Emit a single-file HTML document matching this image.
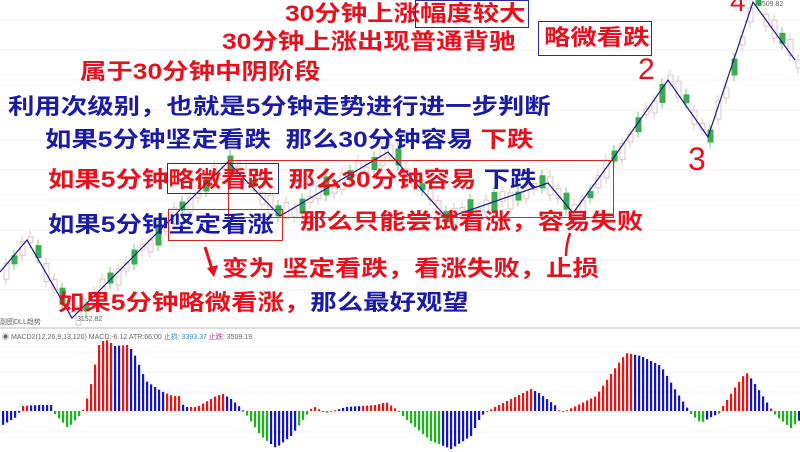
<!DOCTYPE html>
<html><head><meta charset="utf-8"><style>
body{margin:0;width:800px;height:452px;overflow:hidden;background:#fff;position:relative;font-family:"Liberation Sans","Noto Sans CJK SC",sans-serif;font-weight:bold}
.t{position:absolute;white-space:nowrap;line-height:1;transform:scaleX(1.2);transform-origin:0 0;font-size:22px}
.r{color:#e8101c}.b{color:#1a1aa8}
.box{position:absolute;border:1.5px solid #2a2aa0}
.rbox{position:absolute;border:1.5px solid #d22}
svg{position:absolute;left:0;top:0}
.sm{position:absolute;font-size:7px;font-weight:normal;color:#666;white-space:nowrap}
.n{position:absolute;color:#e8101c;font-weight:normal;line-height:1}
</style></head><body>
<svg id="s" width="800" height="452"></svg>
<div class="t r" style="left:285px;top:3px">30分钟上涨幅度较大</div>
<div class="box" style="left:415px;top:0px;width:112px;height:26px"></div>
<div class="t r" style="left:222px;top:31px">30分钟上涨出现普通背驰</div>
<div class="box" style="left:538px;top:21px;width:112px;height:33px"></div>
<div class="t r" style="left:544px;top:27px">略微看跌</div>
<div class="t r" style="left:80px;top:61px">属于30分钟中阴阶段</div>
<div class="t b" style="left:8px;top:96px">利用次级别，也就是5分钟走势进行进一步判断</div>
<div class="t b" style="left:45px;top:129px">如果5分钟坚定看跌&nbsp; 那么30分钟容易 <span class="r">下跌</span></div>
<div class="rbox" style="left:228px;top:160px;width:384px;height:56px"></div>
<div class="box" style="left:167px;top:163px;width:110px;height:29px"></div>
<div class="t r" style="left:48px;top:169px">如果5分钟略微看跌&nbsp; 那么30分钟容易 <span class="b">下跌</span></div>
<div class="rbox" style="left:168px;top:209px;width:113px;height:30px"></div>
<div class="t b" style="left:48px;top:214px">如果5分钟坚定看涨</div>
<div class="t r" style="left:300px;top:211px">那么只能尝试看涨，容易失败</div>
<div class="t r" style="left:222px;top:258px">变为 坚定看跌，看涨失败，止损</div>
<div class="t r" style="left:58px;top:292px">如果5分钟略微看涨，<span class="b">那么最好观望</span></div>
<div class="n" style="left:638px;top:55px;font-size:30px">2</div>
<div class="n" style="left:688px;top:143px;font-size:32px">3</div>
<div class="n" style="left:730px;top:-12px;font-size:28px">4</div>
<div class="sm" style="left:77px;top:316px">3152.82</div>
<div class="sm" style="left:758px;top:1px">3509.82</div>
<div class="sm" style="left:0;top:317px">副图DLL趋势</div>
<div class="sm" style="left:2px;top:332px">◉ MACD2(12,26,9,13,120) MACD:-6.12 ATR:66.00 <span style="color:#38c">止损: 3393.37</span> <span style="color:#a3a">止跌:</span> 3509.19</div>
<script>
var s=document.getElementById('s'),h='';
for(var y=20;y<320;y+=30)h+='<line x1="0" x2="800" y1="'+y+'" y2="'+y+'" stroke="#f0f0f0"/>';
h+='<line x1="0" x2="800" y1="328" y2="328" stroke="#ddd" stroke-width="2"/>';
for(var y=352;y<452;y+=20)h+='<line x1="0" x2="800" y1="'+y+'" y2="'+y+'" stroke="#f2f2f2"/>';
var P=[[0,272],[27,240],[72,318],[228,162],[280,216],[388,152],[447,218],[548,183],[573,213],[612,160],[668,80],[708,137],[753,2],[795,60]];
function yAt(x){for(var i=0;i<P.length-1;i++)if(x>=P[i][0]&&x<=P[i+1][0])return P[i][1]+(P[i+1][1]-P[i][1])*(x-P[i][0])/(P[i+1][0]-P[i][0]);return 60}
for(var x=4;x<800;x+=8){var c=yAt(x)+((x*11)%9-4),g=(x*7)%3==0,hh=6+(x*13)%14;
h+='<line x1="'+(x+2)+'" x2="'+(x+2)+'" y1="'+(c-hh/2-6)+'" y2="'+(c+hh/2+6)+'" stroke="'+(g?'#7c7':'#dcc')+'"/>';
h+='<rect x="'+x+'" y="'+(c-hh/2)+'" width="5" height="'+hh+'" fill="'+(g?'#3bac50':'#fff')+'" stroke="'+(g?'#3bac50':'#e0c4c4')+'"/>';}
h+='<polyline points="'+P.join(' ')+'" fill="none" stroke="#1a1a90" stroke-width="1.2"/>';
h+='<path d="M205 247 L213 272" stroke="#e8101c" stroke-width="3"/><path d="M207 268 L214 277 L218 265" fill="#e8101c"/>';
h+='<path d="M570 233 Q566 245 566 256" stroke="#e8101c" stroke-width="2.5" fill="none"/>';
var Z=411,K=[[0,-15,'b'],[17,-5,'b'],[20,5,'r'],[37,6,'b'],[50,6,'b'],[54,-3,'g'],[67,-17,'g'],[80,-3,'g'],[83,3,'r'],[89,22,'r'],[98,66,'r'],[104,72,'r'],[110,68,'r'],[114,65,'b'],[126,66,'r'],[132,60,'b'],[145,30,'b'],[160,20,'b'],[172,15,'r'],[178,15,'r'],[183,4,'b'],[196,4,'r'],[215,15,'r'],[222,17,'r'],[230,12,'b'],[240,3,'b'],[245,-3,'g'],[260,-25,'g'],[275,-37,'b'],[290,-25,'b'],[305,-5,'g'],[312,5,'r'],[325,-2,'g'],[345,4,'b'],[375,6,'r'],[385,9,'r'],[395,2,'g'],[405,-8,'g'],[430,-30,'g'],[450,-38,'b'],[470,-25,'b'],[480,-5,'b'],[492,3,'r'],[510,12,'r'],[530,22,'r'],[538,18,'b'],[555,5,'b'],[560,-2,'g'],[575,5,'r'],[595,15,'r'],[612,40,'r'],[625,58,'r'],[640,55,'b'],[660,45,'b'],[675,20,'b'],[685,5,'b'],[690,-3,'g'],[700,-12,'g'],[712,-5,'b'],[720,-2,'g'],[722,5,'r'],[735,25,'r'],[745,39,'r'],[752,30,'b'],[765,10,'b'],[775,-5,'g'],[790,-17,'g'],[800,-8,'b']];
var C={r:'#e01818',b:'#1515c0',g:'#20b020'};
for(var x=2;x<800;x+=4){var i=0;while(i<K.length-2&&K[i+1][0]<x)i++;var a=K[i],b=K[i+1],v=a[1]+(b[1]-a[1])*(x-a[0])/((b[0]-a[0])||1);
var col=(x-a[0]<b[0]-x)?a[2]:b[2];if(v>0&&col=='g')col='r';if(v<0&&col=='r')col='g';
h+='<rect x="'+x+'" y="'+(v>0?Z-v:Z)+'" width="2.2" height="'+Math.max(1,Math.abs(v))+'" fill="'+C[col]+'"/>';}
s.innerHTML=h;
</script>
</body></html>
